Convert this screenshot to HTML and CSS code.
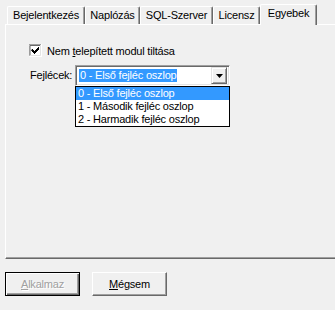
FILE: index.html
```html
<!DOCTYPE html>
<html lang="hu">
<head>
<meta charset="utf-8">
<link rel="stylesheet" href="styles.css">
</head>
<body>
<div class="tabs">
  <div class="tab w1">Bejelentkezés</div>
  <div class="tab w2">Naplózás</div>
  <div class="tab w3">SQL-Szerver</div>
  <div class="tab w4">Licensz</div>
  <div class="tab active w5">Egyebek</div>
</div>
<div class="panel">
  <div class="opt">
    <svg class="check" width="13" height="13" viewBox="0 0 13 13">
      <rect x="0" y="0" width="13" height="13" fill="#ffffff"/>
      <path d="M0 12.5V0.5H12.5" fill="none" stroke="#a0a0a0" stroke-width="1"/>
      <path d="M1 11.5V1.5H11.5" fill="none" stroke="#696969" stroke-width="1"/>
      <path d="M0.5 13V12.5H12.5V0" fill="none" stroke="#ffffff" stroke-width="1"/>
      <path d="M1.5 12V11.5H11.5V1" fill="none" stroke="#e3e3e3" stroke-width="1"/>
      <path d="M3 5h1v1h1v1h1v-1h1v-1h1v-1h1v-1h1v3h-1v1h-1v1h-1v1h-1v1h-1v-1h-1v-1h-1v-1h-1z" fill="#000"/>
    </svg>
    <span>Nem <u>t</u>elepített modul tiltása</span>
  </div>
  <div class="row">
    <span class="lbl">Fejlécek:</span>
    <div class="combo-col">
      <div class="combo">
        <span class="sel">0 - Első fejléc oszlop</span>
        <span class="drop">
          <svg width="7" height="4" viewBox="0 0 7 4"><path d="M0 0h7l-3.5 4z" fill="#000"/></svg>
        </span>
      </div>
      <div class="list">
        <div class="item hi">0 - Első fejléc oszlop</div>
        <div class="item">1 - Második fejléc oszlop</div>
        <div class="item">2 - Harmadik fejléc oszlop</div>
      </div>
    </div>
  </div>
</div>
<div class="buttons">
  <div class="btn default"><span class="dis"><u>A</u>lkalmaz</span></div>
  <div class="btn"><span><u>M</u>égsem</span></div>
</div>
</body>
</html>
```
FILE: styles.css
```css
html, body {
  margin: 0;
  padding: 0;
  background: #f0f0f0;
  overflow: hidden;
}
body {
  width: 335px;
  height: 310px;
  padding-top: 4px;
  box-sizing: border-box;
  font-family: "Liberation Sans", Arial, sans-serif;
  font-size: 11px;
  letter-spacing: -0.2px;
  color: #000;
}
u { text-decoration: underline; text-underline-offset: 1px; }

.tabs {
  display: flex;
  align-items: flex-end;
  padding-left: 7px;
  height: 20px;
}
.tab {
  box-sizing: border-box;
  height: 18px;
  border-top: 1px solid #ffffff;
  border-left: 1px solid #ffffff;
  border-right: 1px solid #696969;
  border-radius: 2px 2px 0 0;
  box-shadow: inset -1px 0 0 #a0a0a0;
  text-align: center;
  line-height: 16px;
  white-space: nowrap;
  background: #f0f0f0;
}
.tab.active {
  height: 21px;
  margin-bottom: -1px;
  position: relative;
  z-index: 1;
  line-height: 16px;
}
.w1 { width: 78px; }
.w2 { width: 55px; }
.w3 { width: 73px; }
.w4 { width: 47px; }
.w5 { width: 57px; }

.panel {
  box-sizing: border-box;
  margin-left: 5px;
  width: 345px;
  height: 235px;
  border-top: 1px solid #ffffff;
  border-left: 1px solid #ffffff;
  border-bottom: 1px solid #696969;
  box-shadow: inset 0 -1px 0 #a0a0a0;
  padding-top: 19px;
  padding-left: 23px;
}
.opt {
  display: flex;
  align-items: center;
  height: 13px;
  gap: 5px;
}
.check { display: block; flex: none; }

.row {
  display: flex;
  align-items: flex-start;
  margin-top: 8px;
  margin-left: 1px;
}
.lbl {
  width: 45px;
  line-height: 21px;
  flex: none;
}
.combo-col {
  width: 155px;
  display: flex;
  flex-direction: column;
}
.combo {
  box-sizing: border-box;
  height: 21px;
  background: #fff;
  border-top: 1px solid #a0a0a0;
  border-left: 1px solid #a0a0a0;
  border-right: 1px solid #ffffff;
  border-bottom: 1px solid #ffffff;
  box-shadow: inset 1px 1px 0 #696969, inset -1px -1px 0 #e3e3e3;
  display: flex;
  align-items: center;
  padding: 2px 2px 2px 3px;
}
.sel {
  background: #3399ff;
  color: #fff;
  line-height: 13px;
  padding: 0 1px;
}
.drop {
  margin-left: auto;
  box-sizing: border-box;
  width: 16px;
  height: 17px;
  background: #f0f0f0;
  border-top: 1px solid #e3e3e3;
  border-left: 1px solid #e3e3e3;
  border-right: 1px solid #696969;
  border-bottom: 1px solid #696969;
  box-shadow: inset 1px 1px 0 #fff, inset -1px -1px 0 #a0a0a0;
  display: flex;
  align-items: center;
  justify-content: center;
}
.drop svg { display: block; }
.list {
  margin-top: 0;
  background: #fff;
  border: 1px solid #000;
}
.item {
  height: 13px;
  line-height: 13px;
  padding-left: 2px;
  white-space: nowrap;
}
.item.hi {
  background: #3399ff;
  color: #fff;
}

.buttons {
  display: flex;
  gap: 12px;
  padding-left: 5px;
  margin-top: 13px;
}
.btn {
  box-sizing: border-box;
  width: 75px;
  height: 24px;
  background: #f0f0f0;
  border-top: 1px solid #ffffff;
  border-left: 1px solid #ffffff;
  border-right: 1px solid #696969;
  border-bottom: 1px solid #696969;
  box-shadow: inset -1px -1px 0 #a0a0a0;
  display: flex;
  align-items: center;
  justify-content: center;
}
.btn.default {
  border: 1px solid #000;
  box-shadow: inset 1px 1px 0 #fff, inset -1px -1px 0 #696969, inset -2px -2px 0 #a0a0a0;
}
.dis {
  color: #a0a0a0;
  text-shadow: 1px 1px 0 #fff;
}
```
